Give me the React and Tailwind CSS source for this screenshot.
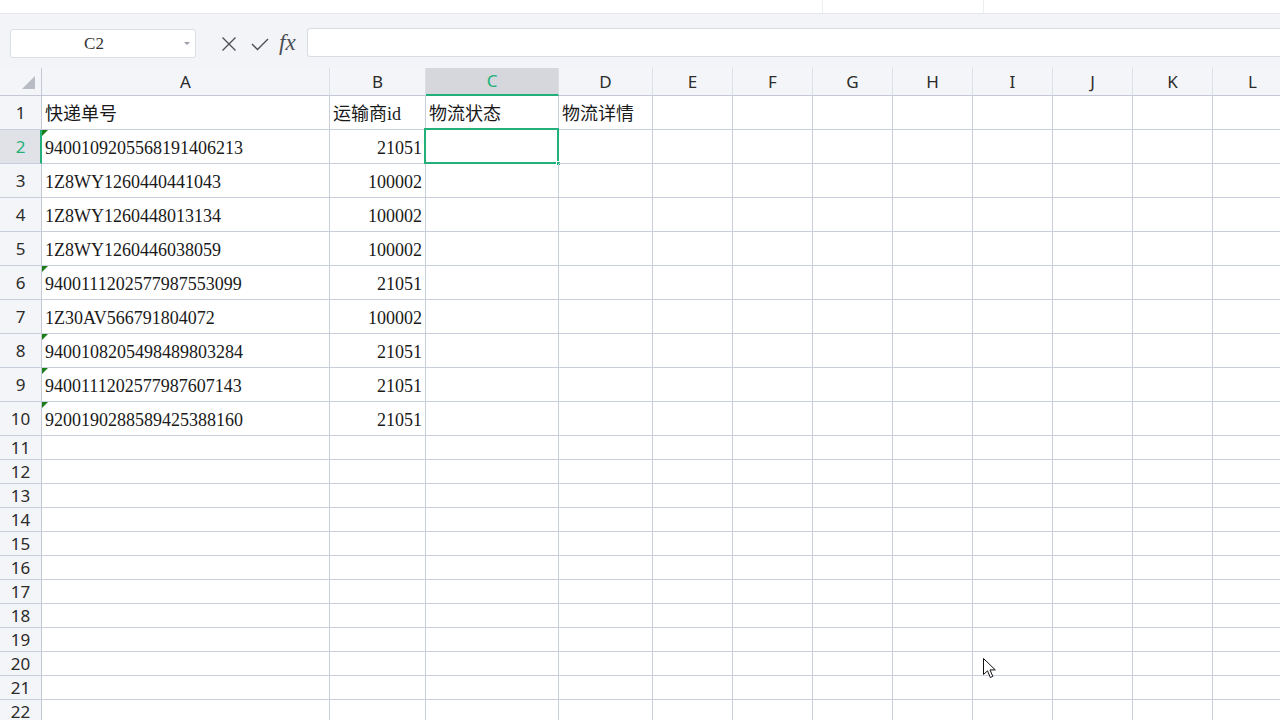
import React from "react";

const COLS = [
  { l: "A", w: "w-[288px]" },
  { l: "B", w: "w-[96px]" },
  { l: "C", w: "w-[133px]" },
  { l: "D", w: "w-[94px]" },
  { l: "E", w: "w-[80px]" },
  { l: "F", w: "w-[80px]" },
  { l: "G", w: "w-[80px]" },
  { l: "H", w: "w-[80px]" },
  { l: "I", w: "w-[80px]" },
  { l: "J", w: "w-[80px]" },
  { l: "K", w: "w-[80px]" },
  { l: "L", w: "w-[80px]" },
];

const DATA = [
  ["快递单号", "运输商id", "物流状态", "物流详情"],
  ["9400109205568191406213", "21051"],
  ["1Z8WY1260440441043", "100002"],
  ["1Z8WY1260448013134", "100002"],
  ["1Z8WY1260446038059", "100002"],
  ["9400111202577987553099", "21051"],
  ["1Z30AV566791804072", "100002"],
  ["9400108205498489803284", "21051"],
  ["9400111202577987607143", "21051"],
  ["9200190288589425388160", "21051"],
];

const cellFont = { fontFamily: '"Liberation Serif", "Noto Sans CJK SC", serif' };
const uiFont = { fontFamily: '"Noto Sans", "Liberation Sans", sans-serif' };

function Cell({ r, c, col }) {
  const val = DATA[r - 1] ? DATA[r - 1][c] : undefined;
  const selected = r === 2 && c === 2;
  const tri = c === 0 && r >= 2 && r <= 10 && val && val[0] === "9";
  const right = c === 1 && r >= 2;
  return (
    <div
      className={`${col.w} shrink-0 relative border-r border-b border-[#c9cedc] flex items-center pt-[2px] ${
        right ? "justify-end pr-[3px]" : "pl-[3px]"
      } text-[18px] text-[#1a1a1a] leading-none`}
      style={cellFont}
    >
      {tri && (
        <div className="absolute left-0 top-0 w-0 h-0 border-t-[6px] border-t-[#1b7d1b] border-r-[6px] border-r-transparent" />
      )}
      {val ? <span>{val}</span> : null}
      {selected && (
        <>
          <div className="absolute -left-[2px] -top-[2px] -right-[1px] -bottom-[1px] border-2 border-[#22b07a] pointer-events-none" />
          <div className="absolute -right-[3px] -bottom-[3px] w-[5px] h-[5px] bg-[#22b07a] border border-white" />
        </>
      )}
    </div>
  );
}

export default function App() {
  const rows = Array.from({ length: 22 }, (_, i) => i + 1);
  return (
    <div className="w-[1280px] h-[720px] overflow-hidden bg-white relative select-none">
      {/* top strip */}
      <div className="h-[14px] flex bg-white border-b border-[#e6e8ed] shadow-[0_1px_2px_rgba(0,0,0,0.04)]">
        <div className="w-[822px]" />
        <div className="w-[161px] border-l border-[#eceef2]" />
        <div className="flex-1 border-l border-[#eceef2]" />
      </div>

      {/* formula bar */}
      <div className="h-[54px] bg-[#f3f4f7] flex items-start pt-[15px]">
        <div
          className="ml-[10px] w-[186px] h-[29px] bg-white border border-[#dcdfe6] rounded-[3px] relative flex items-center justify-center text-[17px] text-[#333]"
          style={cellFont}
        >
          <span className="-ml-[18px]">C2</span>
          <div className="absolute right-[5px] top-[12px] w-0 h-0 border-l-[3px] border-l-transparent border-r-[3px] border-r-transparent border-t-[3px] border-t-[#9a9ea8]" />
        </div>
        <div className="flex items-center h-[29px] ml-[25px]">
          <svg width="16" height="16" viewBox="0 0 16 16" className="block">
            <path d="M1.5 1.5 L14.5 14.5 M14.5 1.5 L1.5 14.5" stroke="#4a4d55" strokeWidth="1.3" fill="none" />
          </svg>
          <svg width="18" height="16" viewBox="0 0 18 16" className="block ml-[14px]">
            <path d="M1 8 L6.5 13.5 L17 3" stroke="#4a4d55" strokeWidth="1.4" fill="none" />
          </svg>
          <span
            className="ml-[10px] text-[23px] italic text-[#4a4d55] leading-none -mt-[2px]"
            style={{ fontFamily: '"Liberation Serif", serif' }}
          >
            fx
          </span>
        </div>
        <div className="ml-[11px] flex-1 h-[29px] -mt-[1px] bg-white border-y border-l border-[#d9dce3] rounded-l-[3px]" />
      </div>

      {/* grid */}
      <div className="flex flex-col">
        {/* column header */}
        <div className="flex h-[28px] bg-[#f4f5f8]">
          <div className="w-[42px] shrink-0 relative border-r border-b border-[#c3c8d4]">
            <div className="absolute left-[22px] top-[8px] w-0 h-0 border-b-[13px] border-b-[#b9bcc4] border-l-[13px] border-l-transparent" />
          </div>
          {COLS.map((col) => {
            const sel = col.l === "C";
            return (
              <div
                key={col.l}
                className={`${col.w} shrink-0 flex items-center justify-center text-[17px] ${
                  sel
                    ? "bg-[#d5d7dd] text-[#22b07a] border-b-2 border-b-[#22b07a]"
                    : "text-[#2b2b2b] border-b border-b-[#c3c8d4]"
                } border-r border-r-[#dcdfe6]`}
                style={uiFont}
              >
                {col.l}
              </div>
            );
          })}
        </div>
        {rows.map((r) => {
          const tall = r <= 10;
          const sel = r === 2;
          return (
            <div key={r} className={`flex ${tall ? "h-[34px]" : "h-[24px]"}`}>
              <div
                className={`w-[42px] shrink-0 flex items-center justify-center text-[17px] border-b border-[#c9cedc] ${
                  sel
                    ? "bg-[#e1e2e7] text-[#22b07a] border-r-2 border-r-[#22b07a]"
                    : "bg-[#f4f5f8] text-[#2b2b2b] border-r border-r-[#c3c8d4]"
                }`}
                style={uiFont}
              >
                <span className={sel ? "ml-[1px]" : ""}>{r}</span>
              </div>
              {COLS.map((col, c) => (
                <Cell key={col.l} r={r} c={c} col={col} />
              ))}
            </div>
          );
        })}
      </div>

      {/* mouse cursor */}
      <svg
        className="absolute left-[983px] top-[658px]"
        width="14"
        height="22"
        viewBox="0 0 14 22"
      >
        <path
          d="M0.5 0.5 L0.5 16.5 L4.5 12.8 L7.3 19.5 L9.8 18.4 L7 11.9 L12.3 11.9 Z"
          fill="#ffffff"
          stroke="#111"
          strokeWidth="1"
          strokeLinejoin="miter"
        />
      </svg>
    </div>
  );
}
